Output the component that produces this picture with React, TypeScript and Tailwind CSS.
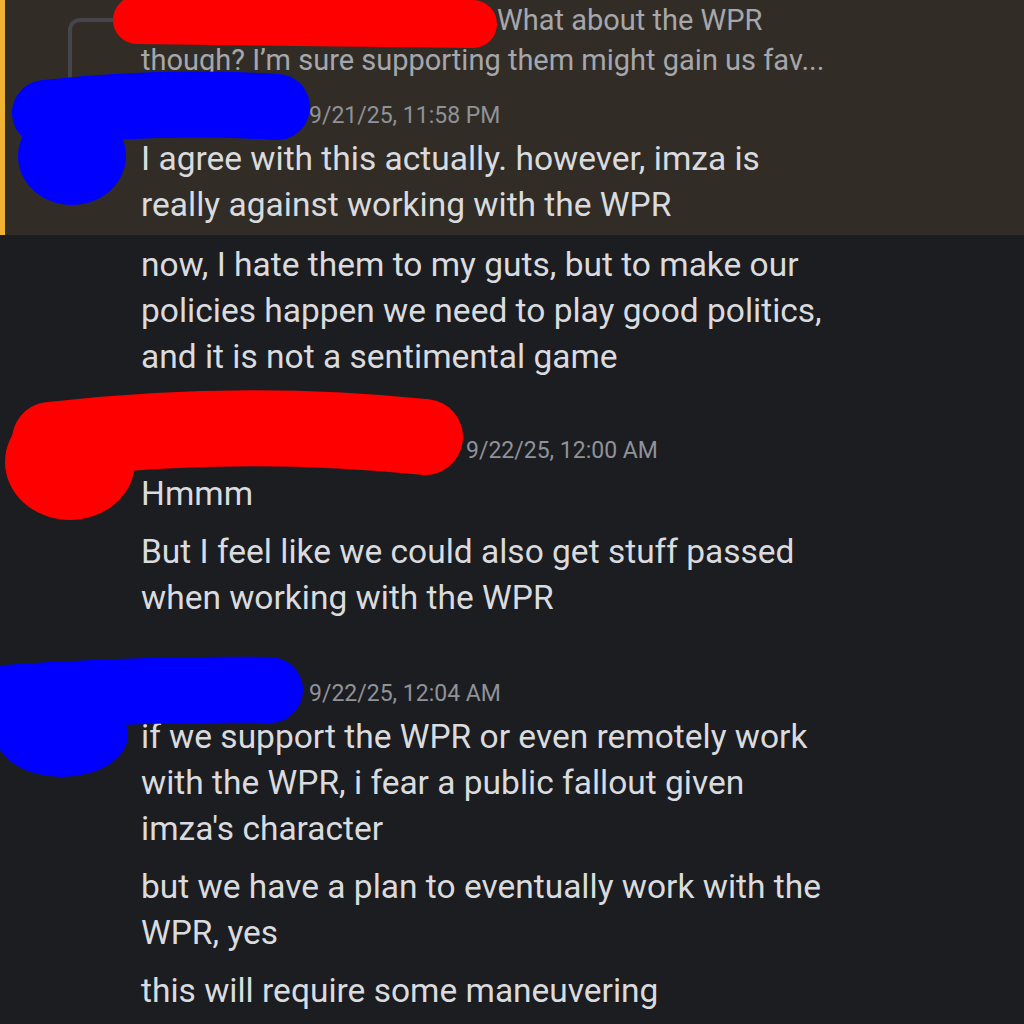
import React from "react";

type Msg = string[];

interface GroupProps {
  time: string;
  nameWidth: string;
  messages: Msg[];
  className?: string;
}

function Header({ time, nameWidth }: { time: string; nameWidth: string }) {
  return (
    <div className="flex h-[40px] items-center gap-[8px]">
      {/* username is hidden under the scribble */}
      <span className={`${nameWidth} shrink-0`} />
      <span className="whitespace-nowrap text-[23px] text-[#8f9299]">{time}</span>
    </div>
  );
}

function Lines({ lines }: { lines: string[] }) {
  return (
    <div className="text-[33.5px] leading-[46px] text-[#dadbdf]">
      {lines.map((l) => (
        <div key={l} className="whitespace-nowrap">
          {l}
        </div>
      ))}
    </div>
  );
}

function Group({ time, nameWidth, messages, className }: GroupProps) {
  return (
    <div className={className}>
      <Header time={time} nameWidth={nameWidth} />
      <div className="flex flex-col gap-[12px]">
        {messages.map((m, i) => (
          <Lines key={i} lines={m} />
        ))}
      </div>
    </div>
  );
}

function Scribbles() {
  return (
    <svg
      className="pointer-events-none absolute inset-0"
      width={1024}
      height={1024}
      viewBox="0 0 1024 1024"
    >
      {/* red, reply author */}
      <path d="M137 20 L473 24" stroke="#ff0000" strokeWidth={48} strokeLinecap="round" fill="none" />
      {/* blue, first author */}
      <path d="M45 113 Q160 100 277 107" stroke="#0000ff" strokeWidth={66} strokeLinecap="round" fill="none" />
      <ellipse cx={72} cy={156} rx={54} ry={49} fill="#0000ff" />
      {/* red, second author */}
      <path d="M50 440 Q240 418 425 437" stroke="#ff0000" strokeWidth={76} strokeLinecap="round" fill="none" />
      <ellipse cx={70} cy={462} rx={65} ry={58} fill="#ff0000" />
      {/* blue, first author again */}
      <path d="M-20 700 Q130 688 270 690" stroke="#0000ff" strokeWidth={66} strokeLinecap="round" fill="none" />
      <ellipse cx={62} cy={735} rx={66} ry={42} fill="#0000ff" />
    </svg>
  );
}

export default function App() {
  return (
    <div className="relative h-[1024px] w-[1024px] overflow-hidden bg-[#1c1d21] font-['Roboto',sans-serif]">
      {/* mentioned message */}
      <div className="flex border-l-[5px] border-[#f0b232] bg-[#312d26] pb-[7px]">
        <div className="w-[136px] shrink-0">
          <div className="ml-[63px] mt-[18px] h-[80px] w-[70px] rounded-tl-[12px] border-l-[4px] border-t-[4px] border-[#45464c]" />
        </div>
        <div className="min-w-0 flex-1">
          <div className="whitespace-nowrap text-[29px] leading-[40px] text-[#a6a7ad]">
            <div className="pl-[356px]">What about the WPR</div>
            <div>though? I’m sure supporting them might gain us fav...</div>
          </div>
          <div className="mt-[16px]">
            <Header time="9/21/25, 11:58 PM" nameWidth="w-[160px]" />
          </div>
          <Lines lines={["I agree with this actually. however, imza is", "really against working with the WPR"]} />
        </div>
      </div>

      <div className="pl-[141px] pt-[7px]">
        <Lines
          lines={[
            "now, I hate them to my guts, but to make our",
            "policies happen we need to play good politics,",
            "and it is not a sentimental game",
          ]}
        />

        <Group
          className="mt-[51px]"
          time="9/22/25, 12:00 AM"
          nameWidth="w-[317px]"
          messages={[
            ["Hmmm"],
            ["But I feel like we could also get stuff passed", "when working with the WPR"],
          ]}
        />

        <Group
          className="mt-[53px]"
          time="9/22/25, 12:04 AM"
          nameWidth="w-[160px]"
          messages={[
            [
              "if we support the WPR or even remotely work",
              "with the WPR, i fear a public fallout given",
              "imza's character",
            ],
            ["but we have a plan to eventually work with the", "WPR, yes"],
            ["this will require some maneuvering"],
          ]}
        />
      </div>

      <Scribbles />
    </div>
  );
}
